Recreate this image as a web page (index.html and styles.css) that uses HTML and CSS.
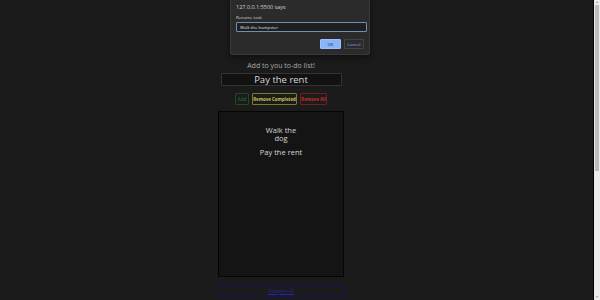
FILE: index.html
```html
<!DOCTYPE html>
<html lang="en">
<head>
  <meta charset="UTF-8" />
  <meta name="viewport" content="width=device-width, initial-scale=1.0" />
  <title>To-do list</title>
  <link rel="stylesheet" href="styles.css">
</head>
<body>
  <div class="page">
    <main class="app">
      <p class="title">Add to you to-do list!</p>
      <input class="task-input" type="text" value="Pay the rent" />
      <div class="actions">
        <button class="btn add-btn">Add</button>
        <button class="btn completed-btn">Remove Completed</button>
        <button class="btn all-btn">Remove All</button>
      </div>
      <ul class="list">
        <li class="item">Walk the dog</li>
        <li class="item">Pay the rent</li>
      </ul>
      <button class="btn complete-all">Complete All</button>
    </main>
    <div class="scrollbar">
      <span class="arrow">▲</span>
      <div class="thumb"></div>
      <span class="arrow down">▼</span>
    </div>
  </div>

  <!-- prompt() dialog -->
  <div class="dialog">
    <p class="dialog-origin">127.0.0.1:5500 says</p>
    <p class="dialog-label">Rename task</p>
    <input class="dialog-input" type="text" value="Walk the hampster" />
    <div class="dialog-buttons">
      <button class="dbtn ok">OK</button>
      <button class="dbtn cancel">Cancel</button>
    </div>
  </div>
</body>
</html>
```

FILE: styles.css
```css
/* Reset */
* {
  box-sizing: border-box;
  margin: 0;
  padding: 0;
}
body {
  font-family: 'Open Sans', 'Liberation Sans', sans-serif;
  background: #1b1b1b;
  height: 300px;
  overflow: hidden;
}
.page {
  display: flex;
  height: 300px;
}
/* App */
.app {
  flex: 1;
  display: flex;
  flex-direction: column;
  align-items: center;
  padding-top: 61px;
  padding-right: 31px;
  border-right: 1px solid #000;
}
.title {
  font-size: 7px;
  color: #a8a8a8;
  line-height: 9px;
}
.task-input {
  display: block;
  margin-top: 3px;
  width: 121px;
  height: 13px;
  background: #121212;
  border: 1px solid #343434;
  border-radius: 1px;
  color: #d8d8d8;
  font-family: inherit;
  font-size: 9.5px;
  text-align: center;
  outline: none;
}
.actions {
  display: flex;
  gap: 3px;
  margin-top: 7px;
}
.btn {
  display: block;
  background: #1b1b1b;
  font-family: inherit;
  font-weight: 700;
  font-size: 4.4px;
  height: 12px;
  padding: 0;
  white-space: nowrap;
  border-radius: 1px;
  cursor: pointer;
}
.add-btn {
  border: 1px solid #1e4a22;
  color: #1f5a26;
  width: 14px;
}
.completed-btn {
  border: 1px solid #7d7a2c;
  color: #c9c456;
  width: 45px;
}
.all-btn {
  border: 1px solid #7a1c1c;
  color: #c23030;
  width: 27px;
}
/* Lista */
.list {
  list-style: none;
  margin-top: 6px;
  width: 126px;
  height: 166px;
  background: #141414;
  border: 1px solid #050505;
  display: flex;
  flex-direction: column;
  align-items: center;
  gap: 6px;
  padding-top: 14px;
}
.item {
  font-size: 7.5px;
  line-height: 8px;
  color: #d6d6d6;
  text-align: center;
  max-width: 43px;
}
.complete-all {
  margin-top: 7px;
  width: 127px;
  height: 13px;
  border: 1px solid #141460;
  color: #2626a8;
  font-weight: 400;
  font-size: 4.4px;
  text-decoration: underline;
}
/* Scrollbar */
.scrollbar {
  width: 6px;
  background: #ececec;
  display: flex;
  flex-direction: column;
  align-items: center;
}
.arrow {
  font-size: 3px;
  color: #888;
  height: 4px;
  line-height: 4px;
}
.thumb {
  width: 4px;
  height: 166px;
  background: #bdbdbd;
  margin-top: 1px;
}
.arrow.down {
  margin-top: auto;
  margin-bottom: 1px;
}
/* Dialog */
.dialog {
  position: absolute;
  top: 0;
  left: 230px;
  width: 140px;
  height: 55px;
  background: #2b2b2b;
  border: 1px solid #3a3a3a;
  border-top: none;
  border-radius: 0 0 3px 3px;
  box-shadow: 0 2px 6px rgba(0, 0, 0, 0.5);
  padding: 4px 5px 0 5px;
  color: #d0d0d0;
}
.dialog-origin {
  font-size: 5.5px;
  line-height: 7px;
}
.dialog-label {
  font-size: 4.3px;
  margin-top: 3px;
  line-height: 6px;
}
.dialog-input {
  display: block;
  margin-top: 2px;
  width: 131px;
  height: 10px;
  background: #1f1f1f;
  border: 1px solid #6f8fb8;
  border-radius: 1px;
  color: #e0e0e0;
  font-family: inherit;
  font-size: 4.3px;
  padding: 0 3px;
  outline: none;
}
.dialog-buttons {
  display: flex;
  justify-content: flex-end;
  gap: 3px;
  margin-top: 7px;
}
.dbtn {
  display: block;
  font-family: inherit;
  font-size: 4.3px;
  height: 10px;
  border-radius: 1px;
}
.ok {
  width: 21px;
  background: #8ab4f8;
  border: 1px solid #9ec2fa;
  color: #1b2a44;
}
.cancel {
  width: 20px;
  background: #2b2b2b;
  border: 1px solid #444;
  color: #8ab4f8;
}
```
